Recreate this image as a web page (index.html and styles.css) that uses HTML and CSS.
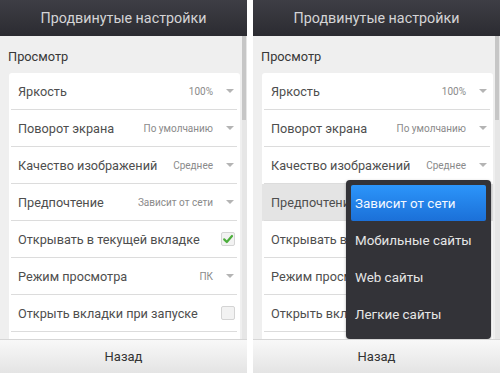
FILE: index.html
```html
<!DOCTYPE html>
<html lang="ru">
<head>
    <meta charset="UTF-8">
    <meta name="viewport" content="width=device-width, initial-scale=1.0">
    <title>Продвинутые настройки</title>
    <link rel="stylesheet" href="styles.css">
</head>
<body>
    <div class="screens">
        <section class="screen">
            <header class="topbar">Продвинутые настройки</header>
            <div class="body">
                <div class="scroll">
                    <h2 class="group-title">Просмотр</h2>
                    <ul class="card">
                        <li class="row"><span class="label">Яркость</span><span class="value">100%</span><span class="arrow"></span></li>
                        <li class="row"><span class="label">Поворот экрана</span><span class="value">По умолчанию</span><span class="arrow"></span></li>
                        <li class="row"><span class="label">Качество изображений</span><span class="value">Среднее</span><span class="arrow"></span></li>
                        <li class="row"><span class="label">Предпочтение</span><span class="value">Зависит от сети</span><span class="arrow"></span></li>
                        <li class="row"><span class="label">Открывать в текущей вкладке</span><span class="check checked"><svg viewBox="0 0 14 14" width="14" height="14"><path d="M3.2 7.4 L5.8 10 L11 4" fill="none" stroke="#4cae3c" stroke-width="2.2" stroke-linecap="round" stroke-linejoin="round"/></svg></span></li>
                        <li class="row"><span class="label">Режим просмотра</span><span class="value">ПК</span><span class="arrow"></span></li>
                        <li class="row"><span class="label">Открыть вкладки при запуске</span><span class="check"></span></li>
                        <li class="row"><span class="label">&nbsp;</span></li>
                    </ul>
                </div>
                <div class="scrollbar"><div class="thumb"></div></div>
            </div>
            <footer class="bottombar">Назад</footer>
        </section>

        <section class="screen">
            <header class="topbar">Продвинутые настройки</header>
            <div class="body">
                <div class="scroll">
                    <h2 class="group-title">Просмотр</h2>
                    <ul class="card">
                        <li class="row"><span class="label">Яркость</span><span class="value">100%</span><span class="arrow"></span></li>
                        <li class="row"><span class="label">Поворот экрана</span><span class="value">По умолчанию</span><span class="arrow"></span></li>
                        <li class="row"><span class="label">Качество изображений</span><span class="value">Среднее</span><span class="arrow"></span></li>
                        <li class="row pressed"><span class="label clipped">Предпочтение</span></li>
                        <li class="row"><span class="label clipped">Открывать в текущей вкладке</span></li>
                        <li class="row"><span class="label clipped">Режим просмотра</span></li>
                        <li class="row"><span class="label clipped">Открыть вкладки при запуске</span></li>
                        <li class="row"><span class="label">&nbsp;</span></li>
                    </ul>
                </div>
                <div class="scrollbar"><div class="thumb"></div></div>
                <ul class="popup">
                    <li class="popup-item active">Зависит от сети</li>
                    <li class="popup-item">Мобильные сайты</li>
                    <li class="popup-item">Web сайты</li>
                    <li class="popup-item">Легкие сайты</li>
                </ul>
            </div>
            <footer class="bottombar">Назад</footer>
        </section>
    </div>
</body>
</html>
```

FILE: styles.css
```css
body {
    margin: 0;
    font-family: Roboto, 'Noto Sans', sans-serif;
    background-color: #fff;
    color: #444;
}
.screens {
    display: flex;
    gap: 6px;
    height: 373px;
}
.screen {
    width: 247px;
    height: 373px;
    display: flex;
    flex-direction: column;
    background-color: #efefef;
}
.topbar {
    height: 36px;
    flex-shrink: 0;
    display: flex;
    align-items: center;
    justify-content: center;
    background: linear-gradient(#3e3e45, #2b2b31);
    color: #d4d4d6;
    font-size: 14.3px;
}
.body {
    flex: 1;
    display: flex;
    overflow: hidden;
    position: relative;
}
.scroll {
    flex: 1;
    padding: 12px 2px 0 9px;
}
.group-title {
    margin: 0 0 7px -1px;
    font-size: 12.8px;
    font-weight: normal;
    line-height: 18px;
    color: #383838;
}
.card {
    list-style: none;
    margin: 0;
    padding: 0;
    background-color: #fff;
    border-radius: 3px;
}
.row {
    height: 37px;
    box-sizing: border-box;
    padding: 0 6px 1px 9px;
    display: flex;
    align-items: center;
    background: linear-gradient(#dcdcdc, #dcdcdc) no-repeat 2px 100% / calc(100% - 5px) 1px;
}
.row.pressed {
    background-color: #e4e4e4;
}
.label {
    flex: 1;
    font-size: 12.7px;
    color: #4e4e4e;
    white-space: nowrap;
}
.label.clipped {
    flex: none;
    width: 75px;
    overflow: hidden;
}
.value {
    font-size: 10px;
    color: #8a8a8a;
}
.arrow {
    margin-left: 13px;
    width: 0;
    height: 0;
    border-left: 4px solid transparent;
    border-right: 4px solid transparent;
    border-top: 4px solid #b4b4b4;
}
.check {
    width: 14px;
    height: 14px;
    margin-right: -1px;
    box-sizing: border-box;
    border: 1px solid #d4d4d4;
    border-radius: 2px;
    background-color: #f2f2f2;
    display: flex;
    align-items: center;
    justify-content: center;
}
.check svg {
    flex-shrink: 0;
}
.scrollbar {
    width: 5px;
    flex-shrink: 0;
    background-color: #e6e6e6;
}
.thumb {
    width: 4px;
    height: 84px;
    background-color: #c6c6c6;
}
.popup {
    position: absolute;
    left: 93px;
    top: 144px;
    width: 145px;
    box-sizing: border-box;
    margin: 0;
    padding: 5px 5px 6px;
    list-style: none;
    background-color: #333338;
    border-radius: 4px;
    box-shadow: 0 1px 3px rgba(0, 0, 0, 0.3);
}
.popup-item {
    height: 37px;
    display: flex;
    align-items: center;
    padding-left: 4px;
    font-size: 13.4px;
    color: #e6e6e6;
}
.popup-item.active {
    height: 36px;
    margin-bottom: 1px;
    border-radius: 2px;
    background: linear-gradient(#2c95fa, #1b70d8);
    color: #f4f8ff;
}
.bottombar {
    height: 33px;
    flex-shrink: 0;
    display: flex;
    align-items: center;
    justify-content: center;
    border-top: 1px solid #d6d6d6;
    background: linear-gradient(#f8f8f8, #e4e4e4);
    font-size: 13px;
    color: #333;
}
```
